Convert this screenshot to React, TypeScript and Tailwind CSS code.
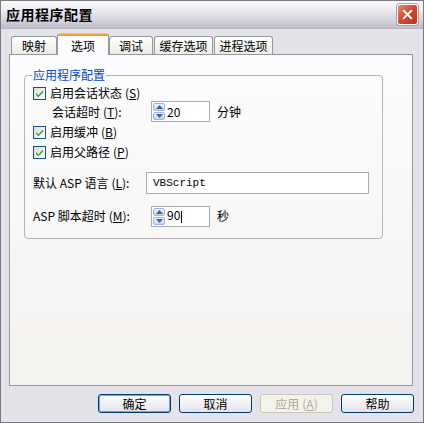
import React from 'react'

const font = { fontFamily: '"Noto Sans CJK SC", "Liberation Sans", sans-serif' }

function Mn({ k }: { k: string }) {
  return (
    <span className="ml-[3px]">
      (<span className="underline underline-offset-1">{k}</span>)
    </span>
  )
}

function Check({ label, k, className = '' }: { label: string; k: string; className?: string }) {
  return (
    <div className={`flex h-[16px] items-center ${className}`}>
      <div className="relative h-[13px] w-[13px] border border-[#1c5180] bg-gradient-to-br from-[#dcdcd7] to-white">
        <svg viewBox="0 0 13 13" className="absolute -left-px -top-px h-[13px] w-[13px]">
          <path d="M3 6 L5.3 8.5 L10 3.6 L10 5.4 L5.3 10.3 L3 7.8 Z" fill="#21a121" />
        </svg>
      </div>
      <span className="ml-[4px] text-[12px] leading-none text-black">
        {label}
        <Mn k={k} />
      </span>
    </div>
  )
}

function Spin({ value, caret }: { value: string; caret?: boolean }) {
  return (
    <div className="flex h-[21px] w-[59px] items-center border border-[#a5acb5] bg-white pl-[1px]">
      <div className="flex flex-col gap-[1px]">
        {[0, 1].map((i) => (
          <div
            key={i}
            className="flex h-[8px] w-[12px] items-center justify-center rounded-[2px] border border-[#9cb3e6] bg-gradient-to-b from-[#eef2fd] to-[#c2d2f7]"
          >
            <svg viewBox="0 0 7 4" className="h-[4px] w-[7px]">
              <path d={i === 0 ? 'M0 4 L3.5 0 L7 4 Z' : 'M0 0 L3.5 4 L7 0 Z'} fill="#4d6185" />
            </svg>
          </div>
        ))}
      </div>
      <span className="ml-[2px] text-[12px] leading-none text-black">
        {value}
        {caret && <span className="ml-[1px] inline-block h-[12px] w-px bg-black align-middle" />}
      </span>
    </div>
  )
}

function Btn({ children, primary, disabled }: { children: React.ReactNode; primary?: boolean; disabled?: boolean }) {
  return (
    <div
      className={`flex h-[19px] w-[73px] items-center justify-center rounded-[3px] border text-[12px] leading-none ${
        disabled
          ? 'border-[#c9c7ba] bg-[#f5f4ea] text-[#aca899]'
          : 'border-[#003c74] bg-gradient-to-b from-white to-[#e3e2e9] text-black'
      } ${primary ? 'shadow-[inset_0_0_0_1px_#7ba2e7]' : ''}`}
    >
      {children}
    </div>
  )
}

export default function App() {
  const tabs = ['映射', '选项', '调试', '缓存选项', '进程选项']
  return (
    <div
      className="flex h-[423px] w-[424px] flex-col border border-[#7a7882] bg-[#e5e2ea]"
      style={font}
    >
      {/* 标题栏 */}
      <div className="flex h-[28px] items-center justify-between border-b border-[#b7b5c0] bg-gradient-to-b from-[#fdfdfe] via-[#e3e2ea] to-[#bfbecc] pl-[5px] pr-[5px]">
        <span className="text-[14px] font-bold tracking-[0.5px] text-black">应用程序配置</span>
        <div className="flex h-[21px] w-[21px] items-center justify-center rounded-[3px] border border-white bg-gradient-to-br from-[#e58a74] via-[#d2472e] to-[#b9341c] shadow-[0_0_0_1px_#b0a0a0]">
          <svg viewBox="0 0 12 12" className="h-[11px] w-[11px]">
            <path d="M2 2 L10 10 M10 2 L2 10" stroke="white" strokeWidth="2.2" strokeLinecap="square" />
          </svg>
        </div>
      </div>

      <div className="flex flex-col px-[8px] pt-[3px]">
        {/* 选项卡 */}
        <div className="flex h-[22px] items-end pl-[2px]">
          {tabs.map((t, i) =>
            i === 1 ? (
              <div
                key={t}
                className="relative z-10 -mb-px flex h-[22px] w-[52px] flex-col rounded-t-[3px] border-x border-[#919b9c] bg-[#fcfcfe]"
              >
                <div className="h-[3px] rounded-t-[3px] bg-gradient-to-b from-[#ffc83c] to-[#e68b2c]" />
                <div className="flex flex-1 items-center justify-center pt-[1px] text-[12px] leading-none">{t}</div>
              </div>
            ) : (
              <div
                key={t}
                className={`flex h-[18px] items-center justify-center rounded-t-[3px] border border-b-0 border-[#919b9c] bg-gradient-to-b from-white to-[#ecebe6] pt-[1px] text-[12px] leading-none ${
                  t.length > 2 ? 'w-[59px]' : i === 0 ? 'w-[46px]' : 'w-[44px]'
                } ${i > 2 ? 'ml-[1px]' : ''}`}
              >
                {t}
              </div>
            )
          )}
        </div>

        {/* 面板 */}
        <div className="h-[332px] w-[404px] border border-[#919b9c] bg-gradient-to-b from-[#fcfcfe] to-[#f4f3f0] pl-[14px] pt-[14px]">
          <fieldset className="w-[359px] rounded-[4px] border border-[#b4b4b4] pb-[11px] pl-[8px] pr-[10px]">
            <legend className="-ml-[1px] px-[1px] text-[12px] leading-none text-[#0046d5]">应用程序配置</legend>
            <div className="flex flex-col">
              <Check label="启用会话状态" k="S" className="mt-[4px]" />
              <div className="flex h-[21px] items-center">
                <span className="w-[118px] pl-[19px] text-[12px] leading-none">
                  会话超时
                  <Mn k="T" />:
                </span>
                <Spin value="20" />
                <span className="ml-[7px] text-[12px] leading-none">分钟</span>
              </div>
              <Check label="启用缓冲" k="B" className="mt-[2px]" />
              <Check label="启用父路径" k="P" className="mt-[4px]" />

              <div className="mt-[12px] flex h-[22px] items-center">
                <span className="w-[113px] text-[12px] leading-none">
                  默认 ASP 语言
                  <Mn k="L" />:
                </span>
                <div
                  className="flex h-[22px] w-[223px] items-center border border-[#a5acb5] bg-white pl-[6px] text-[11px] leading-none"
                  style={{ fontFamily: '"Liberation Mono", monospace' }}
                >
                  VBScript
                </div>
              </div>

              <div className="mt-[11px] flex h-[22px] items-center">
                <span className="w-[118px] text-[12px] leading-none">
                  ASP 脚本超时
                  <Mn k="M" />:
                </span>
                <Spin value="90" caret />
                <span className="ml-[7px] text-[12px] leading-none">秒</span>
              </div>
            </div>
          </fieldset>
        </div>
      </div>

      {/* 按钮 */}
      <div className="mt-[8px] flex justify-end gap-[8px] pr-[9px]">
        <Btn primary>确定</Btn>
        <Btn>取消</Btn>
        <Btn disabled>
          应用<Mn k="A" />
        </Btn>
        <Btn>帮助</Btn>
      </div>
    </div>
  )
}
